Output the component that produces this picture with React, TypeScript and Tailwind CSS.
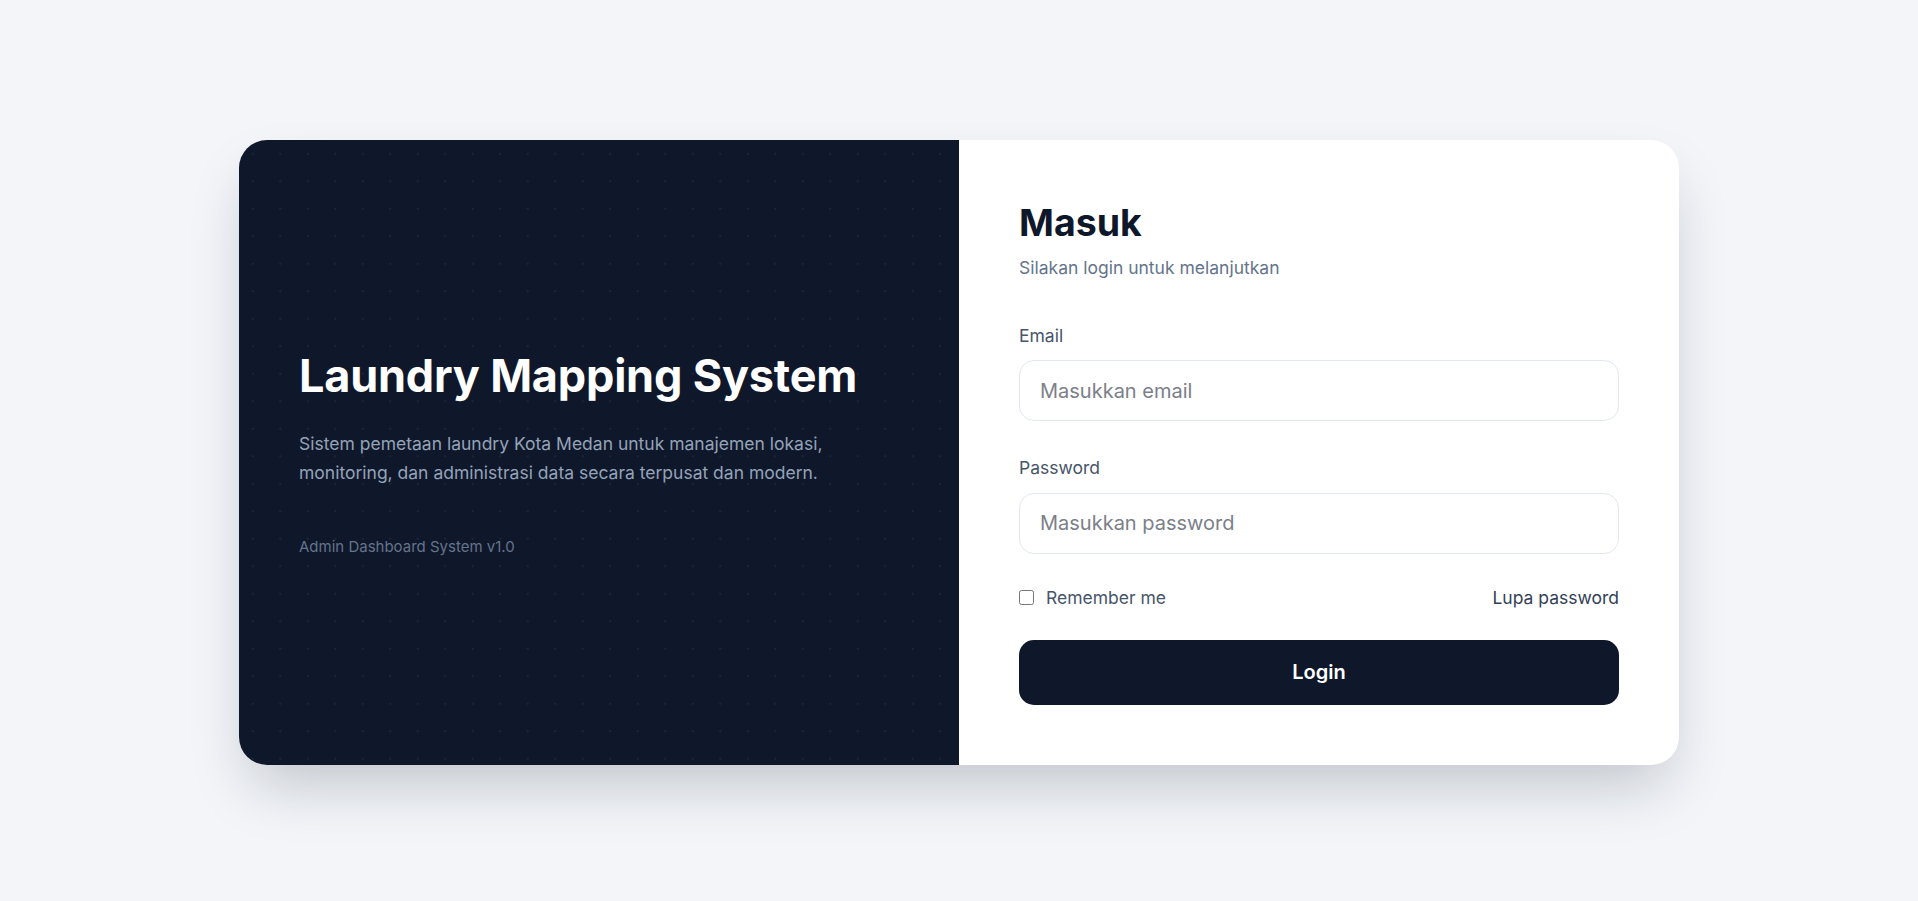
import React from "react";

const dotGrid: React.CSSProperties = {
  backgroundImage:
    "radial-gradient(circle, rgba(148,163,184,0.10) 1px, transparent 1.4px)",
  backgroundSize: "27.5px 27.5px",
};

export default function App() {
  return (
    <div
      className="min-h-screen w-full bg-[#f3f5f9] flex items-center justify-center pt-[3px]"
      style={{ fontFamily: "Inter, 'Noto Sans', sans-serif" }}
    >
      <div className="w-[1440px] flex rounded-[28px] overflow-hidden bg-white shadow-[0_30px_60px_-12px_rgba(15,23,42,0.22)]">
        {/* Brand panel */}
        <div
          className="w-[720px] bg-[#0f172a] flex flex-col justify-center px-[60px] pt-[4px]"
          style={dotGrid}
        >
          <h1 className="text-[45px] leading-[54px] font-bold text-white tracking-[-0.2px]">
            Laundry Mapping System
          </h1>
          <p className="mt-[27px] text-[17.5px] leading-[28.4px] text-[#94a3b8] max-w-[560px]">
            Sistem pemetaan laundry Kota Medan untuk manajemen lokasi,
            monitoring, dan administrasi data secara terpusat dan modern.
          </p>
          <p className="mt-[49px] text-[15px] leading-[22.5px] text-[#64748b]">
            Admin Dashboard System v1.0
          </p>
        </div>

        {/* Login form */}
        <div className="w-[720px] px-[60px] pt-[60px] pb-[60px] flex flex-col">
          <h2 className="text-[37.5px] leading-[45px] font-bold text-[#0f172a]">
            Masuk
          </h2>
          <p className="mt-[10px] text-[17.5px] leading-[25px] text-[#64748b]">
            Silakan login untuk melanjutkan
          </p>

          <label className="mt-[43px] text-[17.5px] leading-[25px] text-[#475569]">
            Email
          </label>
          <input
            type="email"
            placeholder="Masukkan email"
            className="mt-[12.5px] h-[61px] w-full rounded-[15px] border border-[#e2e8f0] px-[20px] text-[20px] text-[#0f172a] placeholder:text-[#7b8089] outline-none"
          />

          <label className="mt-[34px] text-[17.5px] leading-[25px] text-[#475569]">
            Password
          </label>
          <input
            type="password"
            placeholder="Masukkan password"
            className="mt-[12.5px] h-[61px] w-full rounded-[15px] border border-[#e2e8f0] px-[20px] text-[20px] text-[#0f172a] placeholder:text-[#7b8089] outline-none"
          />

          <div className="mt-[31px] h-[25px] flex items-center justify-between">
            <label className="flex items-center gap-[12px] text-[17.5px] leading-[25px] text-[#475569]">
              <input type="checkbox" className="w-[15px] h-[15px] m-0" />
              Remember me
            </label>
            <a className="text-[17.5px] leading-[25px] text-[#334155] cursor-pointer">
              Lupa password
            </a>
          </div>

          <button className="mt-[30px] h-[65px] w-full rounded-[15px] bg-[#0f172a] text-white text-[20px] font-semibold">
            Login
          </button>
        </div>
      </div>
    </div>
  );
}
